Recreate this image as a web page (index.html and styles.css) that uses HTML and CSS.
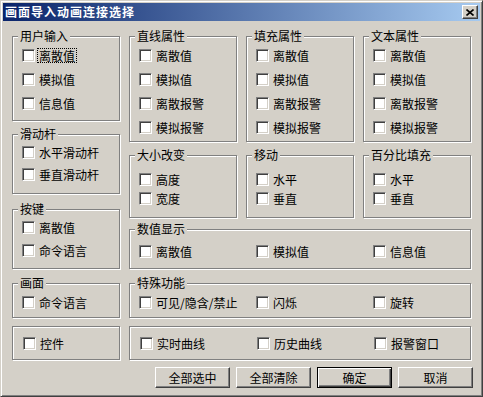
FILE: index.html
```html
<!DOCTYPE html>
<html lang="zh">
<head>
    <meta charset="UTF-8">
    <title>画面导入动画连接选择</title>
    <link rel="stylesheet" href="styles.css">
</head>
<body>
<div class="win">
    <div class="titlebar">
        <span class="title">画面导入动画连接选择</span>
        <span class="close">
            <svg width="8" height="7" viewBox="0 0 8 7"><path d="M0.5 0.5 L7.5 6.5 M7.5 0.5 L0.5 6.5" stroke="#000" stroke-width="1.6" fill="none"/></svg>
        </span>
    </div>
    <div class="client">
        <div class="panes">
            <!-- 左列 -->
            <div class="col-l">
                <div class="grp g-user">
                    <span class="gt">用户输入</span>
                    <div class="list">
                        <div class="opt"><span class="cb"></span><span class="lbl focus">离散值</span></div>
                        <div class="opt"><span class="cb"></span><span class="lbl">模拟值</span></div>
                        <div class="opt"><span class="cb"></span><span class="lbl">信息值</span></div>
                    </div>
                </div>
                <div class="grp g-slide">
                    <span class="gt">滑动杆</span>
                    <div class="list">
                        <div class="opt"><span class="cb"></span><span class="lbl">水平滑动杆</span></div>
                        <div class="opt"><span class="cb"></span><span class="lbl">垂直滑动杆</span></div>
                    </div>
                </div>
                <div class="grp g-key">
                    <span class="gt">按键</span>
                    <div class="list">
                        <div class="opt"><span class="cb"></span><span class="lbl">离散值</span></div>
                        <div class="opt"><span class="cb"></span><span class="lbl">命令语言</span></div>
                    </div>
                </div>
                <div class="grp g-scr">
                    <span class="gt">画面</span>
                    <div class="list">
                        <div class="opt"><span class="cb"></span><span class="lbl">命令语言</span></div>
                    </div>
                </div>
                <div class="grp g-ctl">
                    <div class="list">
                        <div class="opt"><span class="cb"></span><span class="lbl">控件</span></div>
                    </div>
                </div>
            </div>
            <!-- 右列 -->
            <div class="col-r">
                <div class="row3">
                    <div class="grp g-line">
                        <span class="gt">直线属性</span>
                        <div class="list">
                            <div class="opt"><span class="cb"></span><span class="lbl">离散值</span></div>
                            <div class="opt"><span class="cb"></span><span class="lbl">模拟值</span></div>
                            <div class="opt"><span class="cb"></span><span class="lbl">离散报警</span></div>
                            <div class="opt"><span class="cb"></span><span class="lbl">模拟报警</span></div>
                        </div>
                    </div>
                    <div class="grp g-line">
                        <span class="gt">填充属性</span>
                        <div class="list">
                            <div class="opt"><span class="cb"></span><span class="lbl">离散值</span></div>
                            <div class="opt"><span class="cb"></span><span class="lbl">模拟值</span></div>
                            <div class="opt"><span class="cb"></span><span class="lbl">离散报警</span></div>
                            <div class="opt"><span class="cb"></span><span class="lbl">模拟报警</span></div>
                        </div>
                    </div>
                    <div class="grp g-line">
                        <span class="gt">文本属性</span>
                        <div class="list">
                            <div class="opt"><span class="cb"></span><span class="lbl">离散值</span></div>
                            <div class="opt"><span class="cb"></span><span class="lbl">模拟值</span></div>
                            <div class="opt"><span class="cb"></span><span class="lbl">离散报警</span></div>
                            <div class="opt"><span class="cb"></span><span class="lbl">模拟报警</span></div>
                        </div>
                    </div>
                </div>
                <div class="row3 row-size">
                    <div class="grp g-size">
                        <span class="gt">大小改变</span>
                        <div class="list">
                            <div class="opt"><span class="cb"></span><span class="lbl">高度</span></div>
                            <div class="opt"><span class="cb"></span><span class="lbl">宽度</span></div>
                        </div>
                    </div>
                    <div class="grp g-size">
                        <span class="gt">移动</span>
                        <div class="list">
                            <div class="opt"><span class="cb"></span><span class="lbl">水平</span></div>
                            <div class="opt"><span class="cb"></span><span class="lbl">垂直</span></div>
                        </div>
                    </div>
                    <div class="grp g-size">
                        <span class="gt">百分比填充</span>
                        <div class="list">
                            <div class="opt"><span class="cb"></span><span class="lbl">水平</span></div>
                            <div class="opt"><span class="cb"></span><span class="lbl">垂直</span></div>
                        </div>
                    </div>
                </div>
                <div class="grp g-num">
                    <span class="gt">数值显示</span>
                    <div class="grid3">
                        <div class="opt"><span class="cb"></span><span class="lbl">离散值</span></div>
                        <div class="opt"><span class="cb"></span><span class="lbl">模拟值</span></div>
                        <div class="opt"><span class="cb"></span><span class="lbl">信息值</span></div>
                    </div>
                </div>
                <div class="grp g-spec">
                    <span class="gt">特殊功能</span>
                    <div class="grid3">
                        <div class="opt"><span class="cb"></span><span class="lbl">可见/隐含/禁止</span></div>
                        <div class="opt"><span class="cb"></span><span class="lbl">闪烁</span></div>
                        <div class="opt"><span class="cb"></span><span class="lbl">旋转</span></div>
                    </div>
                </div>
                <div class="grp g-curve">
                    <div class="grid3">
                        <div class="opt"><span class="cb"></span><span class="lbl">实时曲线</span></div>
                        <div class="opt"><span class="cb"></span><span class="lbl">历史曲线</span></div>
                        <div class="opt"><span class="cb"></span><span class="lbl">报警窗口</span></div>
                    </div>
                </div>
            </div>
        </div>
        <div class="btns">
            <span class="btn">全部选中</span>
            <span class="btn">全部清除</span>
            <span class="btn def">确定</span>
            <span class="btn">取消</span>
        </div>
    </div>
</div>
</body>
</html>
```

FILE: styles.css
```css
*{ margin: 0; padding: 0; box-sizing: border-box; }
body{ background: #d4d0c8; font: 12px "Noto Sans CJK SC", "Liberation Sans", sans-serif; color: #000; }

.win{ width: 483px; height: 397px; padding: 2px; background: #d4d0c8;
    border: 1px solid; border-color: #d4d0c8 #404040 #404040 #d4d0c8;
    box-shadow: inset 1px 1px #fff, inset -1px -1px #808080;
    display: flex; flex-direction: column; }
.titlebar{ height: 18px; flex: none; padding-left: 2px;
    background: linear-gradient(to right, #0a246a, #a6caf0);
    display: flex; align-items: center; justify-content: space-between; }
.title{ color: #fff; font-weight: bold; letter-spacing: 1px; line-height: 18px; }
.close{ width: 16px; height: 14px; margin-right: 2px; background: #d4d0c8;
    border: 1px solid; border-color: #fff #404040 #404040 #fff;
    box-shadow: inset -1px -1px #808080;
    display: flex; align-items: center; justify-content: center; }
.close svg{ display: block; }

.client{ flex: 1; padding: 15px 7px 0 9px; display: flex; flex-direction: column; }
.panes{ display: flex; gap: 9px; }
.col-l{ width: 108px; display: flex; flex-direction: column; }
.col-r{ width: 342px; display: flex; flex-direction: column; }
.row3{ display: grid; grid-template-columns: repeat(3, 108px); gap: 9px; }

/* 分组框 */
.grp{ border: 1px solid #808080; box-shadow: inset 1px 1px #fff, 1px 1px #fff;
    display: flex; flex-direction: column; padding-left: 9px; }
.gt{ align-self: flex-start; height: 14px; line-height: 14px; margin: -8px 0 0 -4px;
    padding: 0 2px; background: #d4d0c8; white-space: nowrap; }
.list{ display: flex; flex-direction: column; }
.grid3{ display: grid; grid-template-columns: repeat(3, 117px); }

/* 复选框 */
.opt{ height: 13px; display: flex; align-items: center; gap: 2px; white-space: nowrap; }
.cb{ width: 13px; height: 13px; flex: none; background: #fff;
    border: 1px solid; border-color: #808080 #fff #fff #808080;
    box-shadow: inset 1px 1px #404040, inset -1px -1px #d4d0c8; }
.lbl{ line-height: 13px; padding: 0 1px; border: 1px solid transparent; }
.lbl.focus{ border: 1px dotted #000; }

.g-user{ height: 85px; }
.g-user .list, .g-line .list{ margin-top: 6px; gap: 11px; }
.g-line{ height: 106px; }
.g-slide{ height: 60px; margin-top: 13px; }
.g-slide .list{ margin-top: 5px; gap: 9px; }
.g-key{ height: 60px; margin-top: 15px; }
.g-key .list{ margin-top: 5px; gap: 10px; }
.g-scr{ height: 35px; margin-top: 14px; }
.g-scr .list{ margin-top: 6px; }
.g-ctl{ height: 34px; margin-top: 8px; padding-left: 10px; }
.g-ctl .list{ margin-top: 10px; }

.row-size{ margin-top: 13px; }
.g-size{ height: 63px; }
.g-size .list{ margin-top: 11px; gap: 6px; }
.g-num{ height: 40px; margin-top: 11px; }
.g-num .grid3{ margin-top: 9px; }
.g-spec{ height: 35px; margin-top: 14px; }
.g-spec .grid3{ margin-top: 6px; }
.g-curve{ height: 34px; margin-top: 8px; padding-left: 10px; }
.g-curve .grid3{ margin-top: 10px; }

/* 按钮 */
.btns{ display: flex; justify-content: flex-end; gap: 6px; margin-top: 7px; }
.btn{ width: 75px; height: 21px; line-height: 19px; text-align: center;
    border: 1px solid; border-color: #fff #404040 #404040 #fff;
    box-shadow: inset -1px -1px #808080; }
.btn.def{ border: 1px solid #000;
    box-shadow: inset 1px 1px #fff, inset -1px -1px #404040, inset -2px -2px #808080; }
```
